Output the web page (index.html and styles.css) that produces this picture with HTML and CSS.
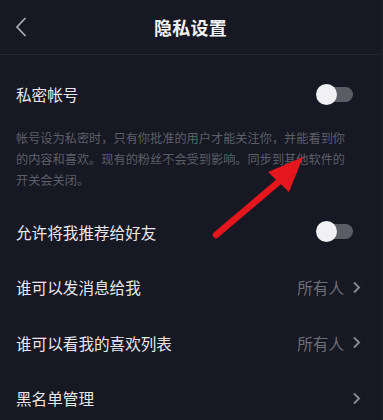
FILE: index.html
```html
<!DOCTYPE html>
<html lang="zh-CN">
<head>
    <meta charset="UTF-8">
    <meta name="viewport" content="width=device-width, initial-scale=1.0">
    <title>隐私设置</title>
    <link rel="stylesheet" href="styles.css">
</head>
<body>

<div class="screen">
    <div class="nav-bar">
        <span class="nav-back">
            <svg width="14" height="22" viewBox="0 0 14 22"><path d="M11.5 2 L3 11 L11.5 20" fill="none" stroke="#a9aab0" stroke-width="1.8"/></svg>
        </span>
        <h1>隐私设置</h1>
    </div>

    <div class="settings">
        <div class="row row-first">
            <span class="row-title">私密帐号</span>
            <span class="switch"><span class="knob"></span></span>
        </div>
        <p class="hint">帐号设为私密时，只有你批准的用户才能关注你，并能看到你的内容和喜欢。现有的粉丝不会受到影响。同步到其他软件的开关会关闭。</p>

        <div class="row row-gap">
            <span class="row-title">允许将我推荐给好友</span>
            <span class="switch"><span class="knob"></span></span>
        </div>
        <div class="row">
            <span class="row-title">谁可以发消息给我</span>
            <span class="row-value">所有人<svg class="chevron" width="9" height="13" viewBox="0 0 9 13"><path d="M2 1.5 L7 6.5 L2 11.5" fill="none" stroke="#85868d" stroke-width="2"/></svg></span>
        </div>
        <div class="row">
            <span class="row-title">谁可以看我的喜欢列表</span>
            <span class="row-value">所有人<svg class="chevron" width="9" height="13" viewBox="0 0 9 13"><path d="M2 1.5 L7 6.5 L2 11.5" fill="none" stroke="#85868d" stroke-width="2"/></svg></span>
        </div>
        <div class="row">
            <span class="row-title">黑名单管理</span>
            <span class="row-value"><svg class="chevron" width="9" height="13" viewBox="0 0 9 13"><path d="M2 1.5 L7 6.5 L2 11.5" fill="none" stroke="#85868d" stroke-width="2"/></svg></span>
        </div>
    </div>

    <!-- 标注箭头 -->
    <svg class="mark-arrow" width="383" height="420" viewBox="0 0 383 420">
        <line x1="216" y1="235" x2="282" y2="179" stroke="#e5161c" stroke-width="6.5" stroke-linecap="round"/>
        <polygon points="303,157 268,172 289,192" fill="#e5161c"/>
    </svg>
</div>

</body>
</html>
```

FILE: styles.css
```css
html, body {
    margin: 0;
    padding: 0;
}
body {
    font-family: "Noto Sans CJK SC", "Liberation Sans", sans-serif;
    background-color: #161823;
    color: #e6e6e9;
}
.screen {
    position: relative;
    width: 383px;
    height: 420px;
    overflow: hidden;
    background-color: #161823;
    box-sizing: border-box;
    border-right: 2px solid #1c1e29;
}
.nav-bar {
    position: relative;
    height: 54px;
    display: flex;
    align-items: center;
    justify-content: center;
    border-bottom: 1px solid #23252f;
}
.nav-bar h1 {
    margin: 0;
    font-size: 18px;
    font-weight: bold;
    color: #f2f2f4;
    letter-spacing: 0.3px;
}
.nav-back {
    position: absolute;
    left: 14px;
    top: 16px;
    line-height: 0;
}
.settings {
    padding-top: 11px;
}
.row {
    display: flex;
    align-items: center;
    justify-content: space-between;
    height: 55.5px;
    padding: 0 20px 0 16px;
}
.row-first {
    height: 56px;
}
.row-gap {
    margin-top: 13px;
}
.row-title {
    font-size: 15.6px;
    color: #e8e8eb;
}
.row-value {
    display: flex;
    align-items: center;
    font-size: 15.6px;
    color: #6c6d75;
}
.chevron {
    display: block;
    margin-left: 8px;
}
.hint {
    margin: 6px 0 0 0;
    padding: 0 30px 0 16px;
    font-size: 12.2px;
    line-height: 21px;
    color: #5d5f68;
}
.switch {
    position: relative;
    width: 36px;
    height: 15px;
    margin-right: 8px;
    border-radius: 8px;
    background-color: #5b5c64;
}
.knob {
    position: absolute;
    left: -1px;
    top: -3px;
    width: 21px;
    height: 21px;
    border-radius: 50%;
    background-color: #f1f1f3;
}
.mark-arrow {
    position: absolute;
    left: 0;
    top: 0;
    pointer-events: none;
}
```
